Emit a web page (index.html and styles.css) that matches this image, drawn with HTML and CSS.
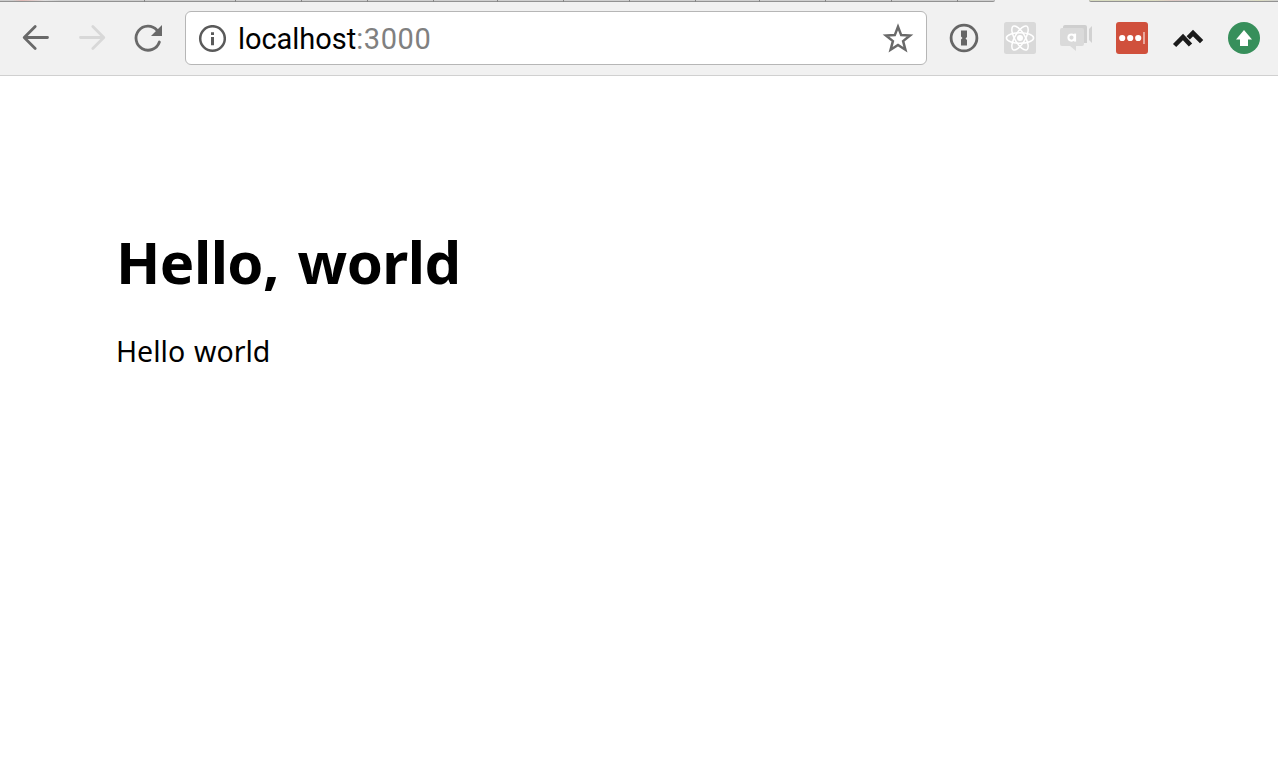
FILE: index.html
```html
<!DOCTYPE html>
<html lang="en">
<head>
<meta charset="utf-8">
<title>Hello, world</title>
<link rel="stylesheet" href="styles.css">
</head>
<body>
<div class="tabs">
  <svg class="tabs-left" viewBox="0 0 995 2"><path d="M144.500 0v2M235.500 0v2M301.500 0v2M367.500 0v2M433.500 0v2M497.500 0v2M563.500 0v2M629.500 0v2M695.500 0v2M759.500 0v2M825.500 0v2M891.500 0v2M957.500 0v2" stroke="#858585"/></svg>
  <div class="tabs-active"></div>
  <div class="tabs-right"></div>
</div>
<header class="toolbar">
  <nav class="nav">
    <svg class="icon" viewBox="0 0 32 32"><path d="M27.500 15.500H4.500M15.200 4.500l-11 11 11 11" fill="none" stroke="#696969" stroke-width="2.800" stroke-linecap="round" stroke-linejoin="round"/></svg>
    <svg class="icon" viewBox="0 0 32 32"><path d="M4.500 15.500H27.500M16.800 4.500l11 11-11 11" fill="none" stroke="#d8d8d8" stroke-width="2.800" stroke-linecap="round" stroke-linejoin="round"/></svg>
    <svg class="icon" viewBox="0 0 32 32"><path d="M27.400 20A12 12 0 1 1 25 8.200" fill="none" stroke="#696969" stroke-width="2.800" stroke-linecap="round"/><path d="M30 3V14H19z" fill="#696969"/></svg>
  </nav>
  <div class="address">
    <svg class="info" viewBox="0 0 28 28"><circle cx="14.500" cy="13.500" r="12.300" fill="none" stroke="#5a5a5a" stroke-width="2.500"/><path d="M13 7.200h3v2.800h-3zM13 12h3v8.200h-3z" fill="#5a5a5a"/></svg>
    <span class="url">localhost<span class="port">:3000</span></span>
    <svg class="star" viewBox="0 0 32 32"><path d="M16 4.800l3.200 8.300 8.800.5-6.900 5.500 2.300 8.600L16 22.900l-7.400 4.800 2.300-8.600L4 13.600l8.800-.5z" fill="none" stroke="#696969" stroke-width="2.500"/></svg>
  </div>
  <div class="extensions">
    <svg class="icon" viewBox="0 0 32 32"><circle cx="16" cy="16" r="12.900" fill="none" stroke="#666" stroke-width="2.800"/><path d="M13 8.500h6v6.500l-1.500 1.500 1.500 1.500v5.500h-6v-6l1.500-1.500-1.500-1.500z" fill="#666"/></svg>
    <svg class="icon" viewBox="0 0 32 32"><rect width="32" height="32" rx="2.500" fill="#d9d9d9"/><g fill="none" stroke="#fff" stroke-width="1.500"><ellipse cx="16" cy="16" rx="13.600" ry="5.200"/><ellipse cx="16" cy="16" rx="13.600" ry="5.200" transform="rotate(60 16 16)"/><ellipse cx="16" cy="16" rx="13.600" ry="5.200" transform="rotate(120 16 16)"/></g><circle cx="16" cy="16" r="3" fill="#fff"/></svg>
    <svg class="icon" viewBox="0 0 32 32"><path d="M3 5q0-2 2-2h20q2 0 2 2v16H3z" fill="#cfcfcf"/><path d="M29 7l3-3v17l-3-3z" fill="#d2d2d2"/><path d="M2 6h20q2 0 2 2v14q0 2-2 2h-6v5l-6-5H2q-2 0-2-2V8q0-2 2-2z" fill="#dadada"/><circle cx="11.500" cy="15.600" r="3.100" fill="none" stroke="#fff" stroke-width="2"/><path d="M15.100 11.600v8" stroke="#fff" stroke-width="2"/></svg>
    <svg class="icon" viewBox="0 0 32 32"><rect width="32" height="32" rx="3" fill="#d0503c"/><g fill="#fff"><circle cx="6.200" cy="16" r="3.100"/><circle cx="14.200" cy="16" r="3.100"/><circle cx="22.200" cy="16" r="3.100"/></g><path d="M28 10v12" stroke="#f2c4bc" stroke-width="1.500"/></svg>
    <svg class="icon" viewBox="0 0 32 32"><g fill="none" stroke="#1b1b1b" stroke-width="4.600"><path d="M2.600 23.500L11 15l7.500 8"/><path d="M16.200 15.800l4.800-4.800 8.600 8.600"/></g></svg>
    <svg class="icon" viewBox="0 0 32 32"><circle cx="16" cy="16" r="16" fill="#378f5b"/><path d="M16 8l8 9.500h-4V24h-8v-6.500H8z" fill="#fff"/></svg>
  </div>
</header>
<main class="page">
  <h1 class="title">Hello, world</h1>
  <p class="text">Hello world</p>
</main>
</body>
</html>
```
FILE: styles.css
```css
* { box-sizing: border-box; }
body { margin: 0; background: #fff; color: #000; }
svg { display: block; flex: none; }
.tabs { display: flex; height: 2px; background: #f1f1f1; }
.tabs-left {
  width: 995px;
  height: 2px;
  box-shadow: inset 0 -1px #929292;
  border-radius: 0 0 3px 0;
  background: linear-gradient(#0000 1px, #929292 1px), linear-gradient(90deg, #cdcdcd 12px, #e0b8b4 22px, #dedede 45px, #cfcfcf 60px);
}
.tabs-active { width: 94px; }
.tabs-right {
  flex: 1;
  border-bottom: 1px solid #929292;
  border-radius: 0 0 0 3px;
  background: linear-gradient(90deg, #d8dcc0, #dcdcc0 35%, #dfc8c4 45%, #cfcfcf 60%, #d5d5d5 80%, #dcdcc0 90%, #d0d0d0);
}
.toolbar {
  display: flex;
  align-items: flex-start;
  height: 74px;
  padding-top: 9px;
  background: #f1f1f1;
  border-bottom: 1px solid #d0d0d0;
}
.nav { display: flex; gap: 24px; width: 185px; padding: 11px 0 0 20px; }
.icon { width: 32px; height: 32px; }
.address {
  display: flex;
  align-items: center;
  width: 742px;
  height: 54px;
  padding: 0 12px;
  background: #fff;
  border: 1px solid #b6b6b6;
  border-radius: 6px;
}
.info { width: 28px; height: 28px; margin-top: 1px; }
.url {
  flex: 1;
  margin-left: 12px;
  padding-top: 2px;
  font: 29px/34px Roboto, sans-serif;
  letter-spacing: -0.05px;
}
.port { color: #808080; letter-spacing: 0.6px; }
.star { width: 32px; height: 32px; }
.extensions { display: flex; gap: 24px; padding: 11px 0 0 21px; }
.page { padding: 146px 116px 0; font-family: "Noto Sans", sans-serif; }
.title {
  margin: 0;
  font-size: 58px;
  line-height: 80px;
  font-weight: 700;
  letter-spacing: -0.55px;
  word-spacing: 4px;
  white-space: nowrap;
}
.text { margin: 29px 0 0; font-size: 28.500px; line-height: 40px; word-spacing: 1.500px; }
```
